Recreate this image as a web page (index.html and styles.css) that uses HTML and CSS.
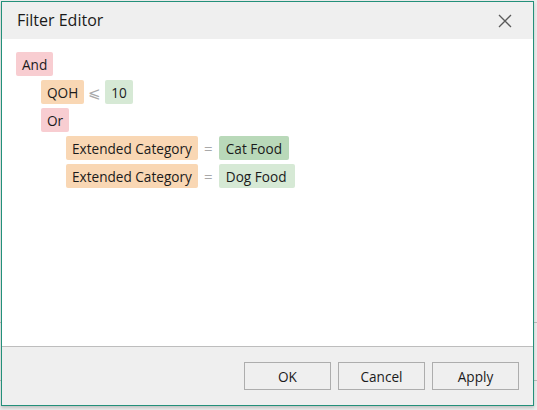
FILE: index.html
```html
<!DOCTYPE html>
<html>
<head>
<meta charset="utf-8">
<title>Filter Editor</title>
<link rel="stylesheet" href="styles.css">
</head>
<body>
<div class="window">
  <div class="titlebar">
    <span class="title">Filter Editor</span>
    <svg class="close" width="14" height="14" viewBox="0 0 14 14"><path d="M1 1L13 13M13 1L1 13" stroke="#5a5a5a" stroke-width="1.3" fill="none"/></svg>
  </div>
  <div class="content">
    <div class="row lvl0"><span class="tok group">And</span></div>
    <div class="row lvl1"><span class="tok field">QOH</span><span class="op">⩽</span><span class="tok value">10</span></div>
    <div class="row lvl1"><span class="tok group">Or</span></div>
    <div class="row lvl2"><span class="tok field">Extended Category</span><span class="op">=</span><span class="tok value active">Cat Food</span></div>
    <div class="row lvl2"><span class="tok field">Extended Category</span><span class="op">=</span><span class="tok value wide">Dog Food</span></div>
  </div>
  <div class="footer">
    <button class="btn">OK</button>
    <button class="btn">Cancel</button>
    <button class="btn">Apply</button>
  </div>
</div>
</body>
</html>
```
FILE: styles.css
```css
html, body {
  margin: 0;
  padding: 0;
}
body {
  width: 537px;
  height: 410px;
  background-color: #ececec;
  background-image: linear-gradient(to bottom, transparent 322px, #bcbcbc 322px, #bcbcbc 323px, transparent 323px, transparent 380px, #bcbcbc 380px, #bcbcbc 381px, transparent 381px);
  font-family: "Open Sans", "Noto Sans", sans-serif;
  color: #1b1b1b;
  overflow: hidden;
}
.window {
  box-sizing: border-box;
  margin: 1px 0 0 1px;
  width: 533px;
  height: 405px;
  border: 1px solid #23907a;
  background: #fff;
  display: flex;
  flex-direction: column;
  box-shadow: 0 2px 3px rgba(0, 0, 0, 0.18);
}
.titlebar {
  height: 37px;
  flex: none;
  background: #efefef;
  display: flex;
  align-items: center;
  justify-content: space-between;
  padding: 0 21px 0 15px;
}
.title {
  font-size: 16px;
  color: #1a1a1a;
  margin-top: -1px;
}
.close {
  display: block;
}
.content {
  flex: 1;
  padding: 13px 0 0 14px;
}
.row {
  display: flex;
  align-items: center;
  height: 24px;
  margin-bottom: 4px;
}
.lvl1 { padding-left: 25px; }
.lvl2 { padding-left: 50px; }
.tok {
  display: flex;
  align-items: center;
  height: 24px;
  padding: 0 6px;
  border-radius: 2px;
  font-size: 13.6px;
  box-sizing: border-box;
}
.group { background: #f8cdd1; }
.field { background: #f9d7b4; }
.value { background: #d6e9d5; }
.value.active { background: #b9d9b9; padding: 0 7px; }
.value.wide { padding: 0 9px 0 7px; }
.op {
  width: 21px;
  text-align: center;
  color: #a9a9a9;
  font-size: 15px;
}
.footer {
  box-sizing: border-box;
  height: 59px;
  flex: none;
  border-top: 1px solid #bdbdbd;
  background: #efefef;
  display: flex;
  justify-content: flex-end;
  align-items: flex-start;
  gap: 7px;
  padding: 15px 14px 0 0;
}
.btn {
  width: 87px;
  height: 28px;
  border: 1px solid #adadad;
  background: #efefef;
  font-family: "Open Sans", "Noto Sans", sans-serif;
  font-size: 13.6px;
  color: #1b1b1b;
  padding: 0;
  margin: 0;
}
```
